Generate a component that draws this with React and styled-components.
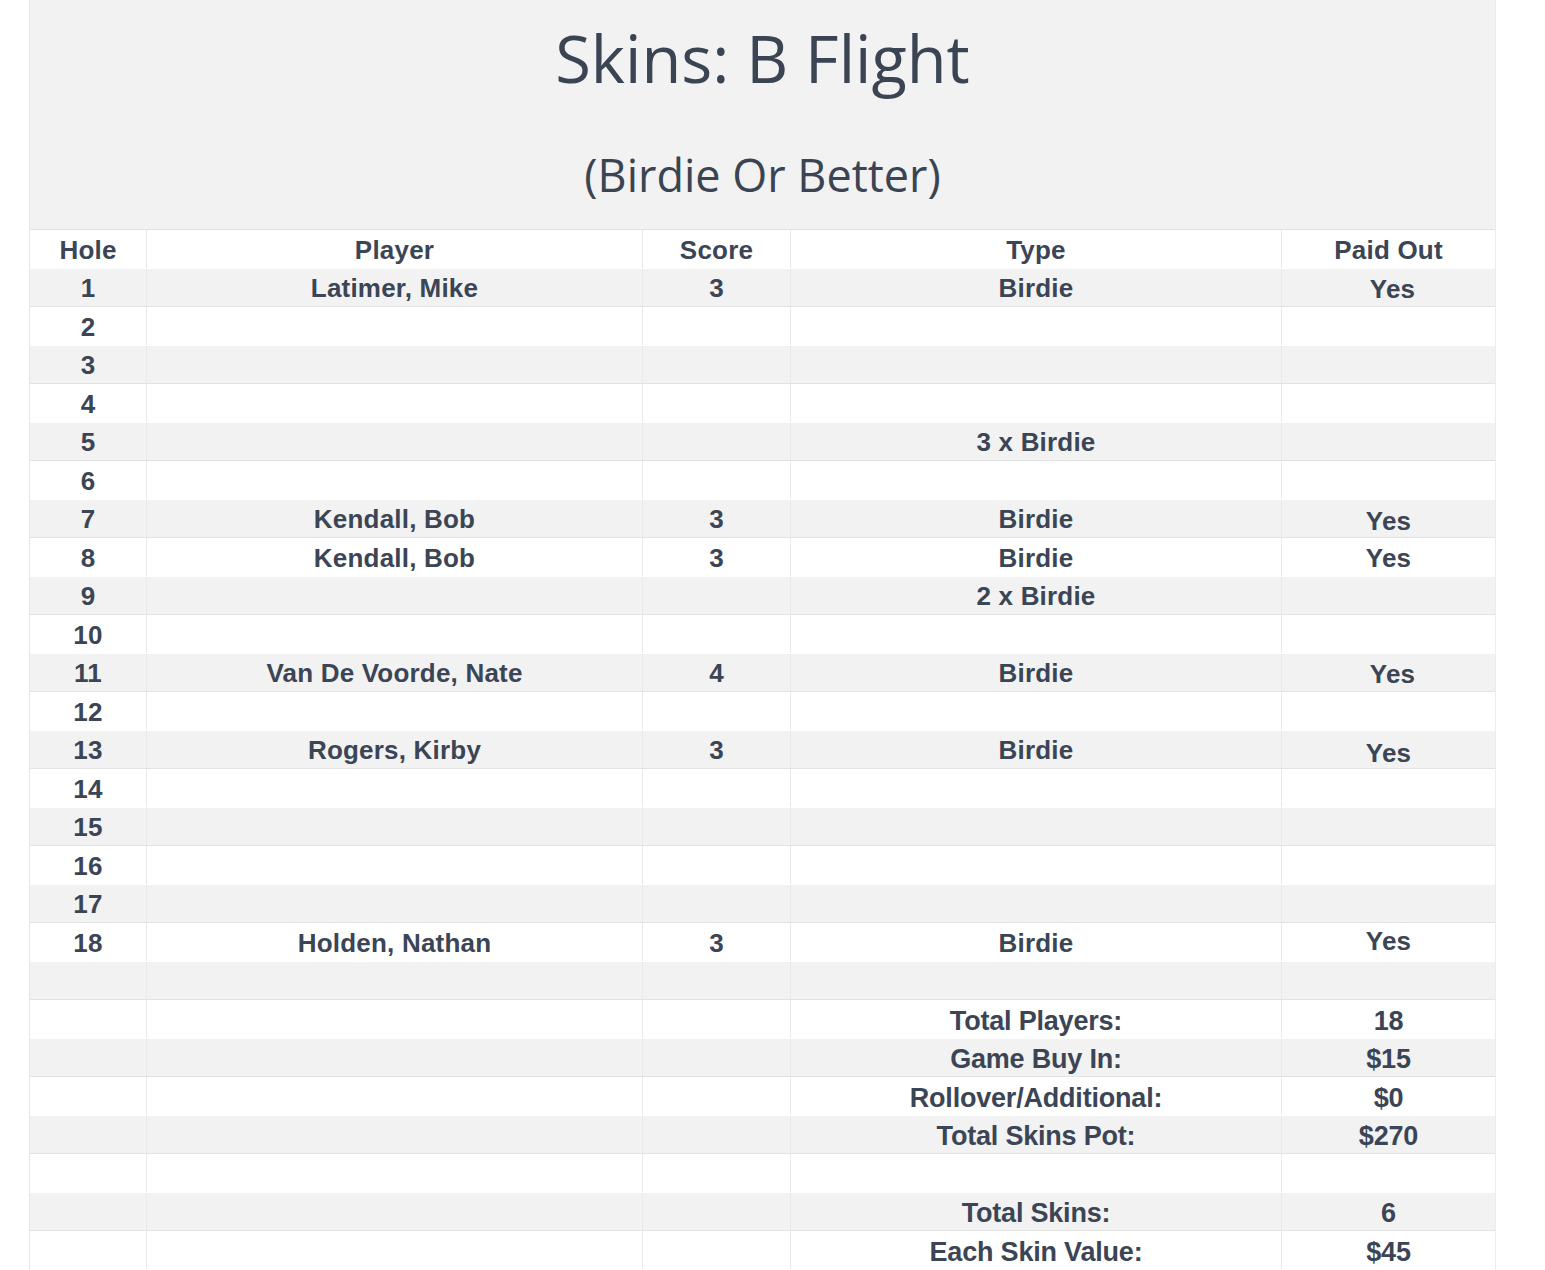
import styled, { createGlobalStyle } from "styled-components";

const GlobalStyle = createGlobalStyle`
  body {
    margin: 0;
    background: #ffffff;
    color: #3b4555;
    font-family: "Liberation Sans", Arial, sans-serif;
  }
`

const Sheet = styled.div`
  margin-left: 29px;
  width: 1467px;
  border-left: 1px solid #e6e6e6;
  border-right: 1px solid #ececec;
  box-sizing: border-box;
`
const Banner = styled.div`
  height: 230px;
  box-sizing: border-box;
  background: #f2f2f2;
  border-bottom: 1px solid #e2e2e2;
  display: flex;
  flex-direction: column;
  align-items: center;
  padding-top: 26px;
  font-family: "Open Sans", "Noto Sans", sans-serif;
  color: #3a4453;
`
const Title = styled.h1`
  margin: 0;
  font-size: 65px;
  font-weight: 400;
  line-height: 64px;
`
const Subtitle = styled.h2`
  margin: 62px 0 0;
  font-size: 45px;
  font-weight: 400;
  line-height: 46px;
`
const Row = styled.div`
  display: grid;
  grid-template-columns: 117px 496px 148px 491px 1fr;
  height: 38.5px;
  box-sizing: border-box;
  background: ${(p) => (p.$shade ? "#f2f2f2" : "#ffffff")};
  border-bottom: 1px solid ${(p) => (p.$shade ? "#e3e3e3" : "transparent")};
`
const Cell = styled.div`
  display: flex;
  align-items: center;
  justify-content: center;
  padding-top: 3px;
  box-sizing: border-box;
  border-right: 1px solid #e9e9e9;
  font-size: 26px;
  font-weight: 700;
  letter-spacing: 0.2px;
  white-space: nowrap;
  &:last-child {
    border-right: none;
  }
`
const Label = styled(Cell)`
  font-size: 27px;
  letter-spacing: -0.2px;
  padding-top: 5px;
`
const Paid = styled.span`
  position: relative;
  left: ${(p) => p.$dx || 0}px;
  top: ${(p) => p.$dy || 0}px;
`

const holes = [
  ["1", "Latimer, Mike", "3", "Birdie", "Yes", 4, 1],
  ["2", "", "", "", ""],
  ["3", "", "", "", ""],
  ["4", "", "", "", ""],
  ["5", "", "", "3 x Birdie", ""],
  ["6", "", "", "", ""],
  ["7", "Kendall, Bob", "3", "Birdie", "Yes", 0, 2],
  ["8", "Kendall, Bob", "3", "Birdie", "Yes", 0, 0],
  ["9", "", "", "2 x Birdie", ""],
  ["10", "", "", "", ""],
  ["11", "Van De Voorde, Nate", "4", "Birdie", "Yes", 4, 1],
  ["12", "", "", "", ""],
  ["13", "Rogers, Kirby", "3", "Birdie", "Yes", 0, 3],
  ["14", "", "", "", ""],
  ["15", "", "", "", ""],
  ["16", "", "", "", ""],
  ["17", "", "", "", ""],
  ["18", "Holden, Nathan", "3", "Birdie", "Yes", 0, -2],
]

const totals = [
  null,
  ["Total Players:", "18"],
  ["Game Buy In:", "$15"],
  ["Rollover/Additional:", "$0"],
  ["Total Skins Pot:", "$270"],
  null,
  ["Total Skins:", "6"],
  ["Each Skin Value:", "$45"],
]

const App = () => {
  return (
    <>
      <GlobalStyle />
      <Sheet>
        <Banner>
          <Title>Skins: B Flight</Title>
          <Subtitle>(Birdie Or Better)</Subtitle>
        </Banner>
        <Row>
          <Cell>Hole</Cell>
          <Cell>Player</Cell>
          <Cell>Score</Cell>
          <Cell>Type</Cell>
          <Cell>Paid Out</Cell>
        </Row>
        {holes.map((h, i) => (
          <Row key={h[0]} $shade={i % 2 === 0}>
            <Cell>{h[0]}</Cell>
            <Cell>{h[1]}</Cell>
            <Cell>{h[2]}</Cell>
            <Cell>{h[3]}</Cell>
            <Cell>
              <Paid $dx={h[5]} $dy={h[6]}>{h[4]}</Paid>
            </Cell>
          </Row>
        ))}
        {totals.map((t, i) => (
          <Row key={"t" + i} $shade={i % 2 === 0}>
            <Cell />
            <Cell />
            <Cell />
            <Label>{t ? t[0] : ""}</Label>
            <Label>{t ? t[1] : ""}</Label>
          </Row>
        ))}
      </Sheet>
    </>
  )
}

export default App
